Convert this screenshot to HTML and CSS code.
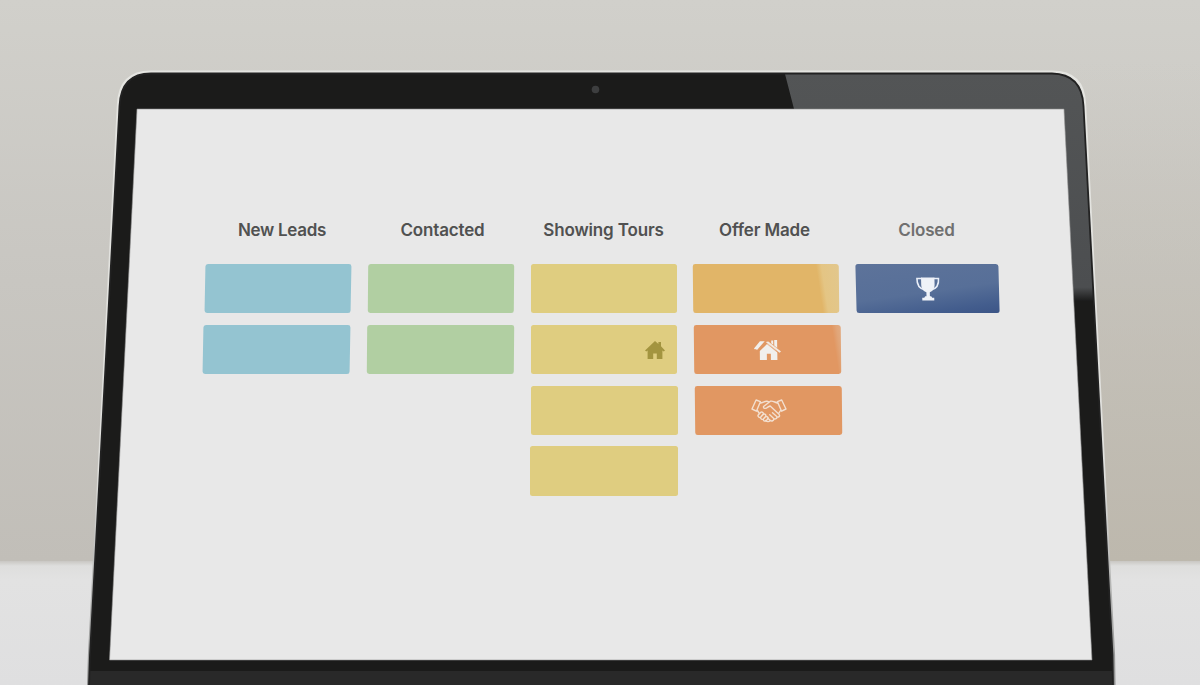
FILE: index.html
```html
<!DOCTYPE html>
<html lang="en">
<head>
<meta charset="utf-8">
<title>Sales Pipeline</title>
<link rel="stylesheet" href="styles.css">
</head>
<body>
<div class="scene">
  <svg class="laptop" viewBox="0 0 1200 685" aria-hidden="true">
    <defs>
      <linearGradient id="wall" x1="0" y1="0" x2="0" y2="1"><stop offset="0" stop-color="#d1d0cb"/><stop offset=".5" stop-color="#c8c6c1"/><stop offset="1" stop-color="#c1beb8"/></linearGradient>
      <linearGradient id="warm" x1="0" y1="0" x2="0" y2="1"><stop offset="0" stop-color="#c5c1b7" stop-opacity="0"/><stop offset="1" stop-color="#bdb8ad"/></linearGradient>
      <linearGradient id="desk" x1="0" y1="0" x2="0" y2="1"><stop offset="0" stop-color="#c9c7c3"/><stop offset=".04" stop-color="#dededd"/><stop offset=".15" stop-color="#e2e2e2"/><stop offset="1" stop-color="#dfdfe0"/></linearGradient>
      <linearGradient id="edge" gradientUnits="userSpaceOnUse" x1="0" y1="70" x2="0" y2="685"><stop offset="0" stop-color="#e5e5e1"/><stop offset=".65" stop-color="#e0e0dd"/><stop offset="1" stop-color="#8e8f8f"/></linearGradient>
      <linearGradient id="shine" gradientUnits="userSpaceOnUse" x1="0" y1="72" x2="0" y2="301"><stop offset="0" stop-color="#535556"/><stop offset=".94" stop-color="#4c4e50"/><stop offset="1" stop-color="#1b1b1b"/></linearGradient>
      <clipPath id="bezel"><path d="M89 685 L90 655 L119.500 106 Q121 73.500 151 73.500 L1052 73.500 Q1082 74 1083.500 106 L1112.500 655 L1113 685 Z"/></clipPath>
    </defs>
    <rect width="1200" height="562" fill="url(#wall)"/>
    <rect x="1070" y="60" width="130" height="502" fill="url(#warm)"/>
    <rect y="561" width="1200" height="124" fill="url(#desk)"/>
    <path d="M88.500 690 L89.500 655 L118.500 104 Q120 72 151 72 L1052 72 Q1083.500 72 1084.500 104 L1113.500 655 L1114 690" fill="#151515" stroke="url(#edge)" stroke-width="3.200"/>
    <g clip-path="url(#bezel)">
      <rect x="80" y="70" width="1040" height="615" fill="#1b1b1a"/>
      <path d="M785 74 H1100 V301 H1060 V109 H794 Z" fill="url(#shine)"/>
      <rect x="80" y="671" width="1040" height="14" fill="#292929"/>
    </g>
    <path d="M89 685 L90 655 L119.500 106 Q121 73.500 151 73.500 L1052 73.500 Q1082 74 1083.500 106 L1112.500 655 L1113 685" fill="none" stroke="#222" stroke-width="1.800"/>
    <circle cx="595.500" cy="89.500" r="3.800" fill="#3d3e3f"/>
    <path d="M137 109 H1064 L1092 660 H109.500 Z" fill="#e8e8e8" stroke="#8f8f8f" stroke-width=".6"/>
  </svg>

  <main class="board">
    <section class="column leads">
      <h2 class="title">New Leads</h2>
      <div class="card blue"></div>
      <div class="card blue second"></div>
    </section>
    <section class="column contacted">
      <h2 class="title">Contacted</h2>
      <div class="card green"></div>
      <div class="card green second"></div>
    </section>
    <section class="column tours">
      <h2 class="title">Showing Tours</h2>
      <div class="card yellow"></div>
      <div class="card yellow second tour-card">
        <svg class="home" viewBox="0 0 20 18"><path fill="currentColor" d="M10 0 L13.400 3 V1 H16 V5.300 L20 9.400 L18.700 10.600 L17.400 9.500 V18 H11.800 V12.500 H8.200 V18 H2.600 V9.500 L1.300 10.600 L0 9.400 Z"/></svg>
      </div>
      <div class="card yellow third"></div>
      <div class="card yellow fourth"></div>
    </section>
    <section class="column offers">
      <h2 class="title">Offer Made</h2>
      <div class="card amber"></div>
      <div class="card orange second">
        <svg class="houses" viewBox="0 0 27 20"><g fill="#f1efec"><path d="M0 8.400 L6 1.300 H10.800 L3 10 L1.800 9 L1 9.600 Z"/><path d="M13.600 3.600 L23.300 12 V20 H16.800 V13.800 H12.800 V20 H5.800 V11 Z"/><path d="M17.300 3.200 V.5 H19.300 V4.800 Z M20.300 0 H23.200 V8 L20.300 5.400 Z"/></g><path d="M4.200 11.600 L12.400 3.200 L25 13.500" fill="none" stroke="#e19762" stroke-width=".7"/><path d="M11.800 2 L14.400 1.500 L27 11.600 L25.500 12.800 Z" fill="#f2e9e1"/></svg>
      </div>
      <div class="card orange third">
        <svg class="handshake" viewBox="0 0 36 24" fill="none" stroke="#f3dfcf" stroke-width="1.400" stroke-linecap="round" stroke-linejoin="round"><path d="M5.200 1 L9.500 2.700 L5.400 12.200 L1 10 Z M30.800 1 L26.500 2.700 L30.600 12.200 L35 10 Z"/><path d="M9.500 4 C12 3.800 13.500 2 16 2.200 L18 3 M26.700 4 C24 3.500 22 1.500 19.500 2.200 L12.600 7.500 C12 9.800 14.800 10 17 8 L19.200 7 L28 15.300 C29.500 17.300 27.200 18.700 25.700 17.500 L21.500 13.700 M25.700 17.500 C26.500 19.500 24 20.700 22.700 19.500 L18.700 15.800 M22.700 19.500 C23 21.700 20.500 22.700 19 21.300 L16.500 19 M19 21.300 C18 23 16 23 14.500 21.500 M6.400 11.500 L8 14 M29.500 11.500 L28 14"/><path d="M7.200 16 L9.700 13.300 C11.200 12.200 13 14 12 15.300 L9.700 18 C8.400 19.100 6.200 17.500 7.200 16 M9.700 18 L12.400 15.300 C13.900 14.400 15.500 16 14.500 17.400 L12.300 20 C11 21 9 19.500 9.700 18 M12.300 20 L14.700 17.600 C16 17 17.700 18.300 16.800 19.800 L15 21.800 C13.600 22.700 11.800 21.500 12.300 20"/></svg>
      </div>
    </section>
    <section class="column closed">
      <h2 class="title">Closed</h2>
      <div class="card navy">
        <svg class="trophy" viewBox="0 0 24 24"><path d="M6 1.500 H1.200 C1 7 3 11.500 8.500 12.700 M18 1.500 H22.800 C23 7 21 11.500 15.500 12.700" fill="none" stroke="#e9eef8" stroke-width="1.600"/><path d="M5.300 .5 H18.700 V7.500 C18.700 11.500 16.500 14.200 13.700 15.200 V19.200 H15 L16 20.800 H18 V23.500 H6 V20.800 H8 L9 19.200 H10.300 V15.200 C7.500 14.200 5.300 11.500 5.300 7.500 Z" fill="#eff2f8"/></svg>
      </div>
    </section>
  </main>
</div>
</body>
</html>
```
FILE: styles.css
```css
body {
  margin: 0;
  overflow: hidden;
}

.scene {
  display: grid;
  width: 1200px;
  height: 685px;
  overflow: hidden;
}

.laptop,
.board {
  grid-area: 1 / 1;
}

.laptop {
  width: 1200px;
  height: 685px;
}

.board {
  z-index: 1;
  display: grid;
  grid-template-columns: 147px 147px 147px 147px 144px;
  column-gap: 16px;
  align-items: start;
  padding: 218px 0 0 204px;
}

.column {
  display: flex;
  flex-direction: column;
  gap: 11.6px;
}

.title {
  width: max-content;
  height: 24px;
  margin: 0 auto 10.8px;
  font: 600 17px/24px Inter, "Liberation Sans", sans-serif;
  letter-spacing: -.15px;
  color: #505151;
}

.leads .title {
  letter-spacing: -.3px;
  transform: translateX(4.5px);
}

.contacted .title {
  transform: translateX(2px);
}

.offers .title {
  transform: translateX(-2px);
}

.closed .title {
  color: #707070;
  transform: translateX(-1.5px);
}

.card {
  display: flex;
  align-items: center;
  justify-content: center;
  box-sizing: border-box;
  width: 147px;
  height: 49px;
  border-radius: 2.5px;
}

.leads .card {
  width: 146px;
  margin-left: .7px;
  transform: skewX(-1.1deg);
}

.leads .second {
  width: 147px;
  margin-left: -1.1px;
}

.contacted .card {
  width: 146px;
  margin-left: .9px;
  transform: skewX(-.5deg);
}

.contacted .second {
  width: 147px;
  margin-left: -.1px;
}

.tours .card {
  width: 145.6px;
  margin-left: 1px;
}

.tours .second {
  width: 146.3px;
  margin-left: .7px;
}

.tours .third {
  width: 147px;
  margin-left: .6px;
}

.tours .fourth {
  width: 148px;
  height: 50px;
  margin-left: .2px;
}

.offers .card {
  width: 145.5px;
  margin-left: .2px;
  transform: skewX(.6deg);
}

.offers .second {
  width: 146.5px;
  margin-left: .8px;
}

.offers .third {
  width: 147px;
  margin-left: 1.6px;
}

.closed .card {
  width: 143px;
  margin-left: .2px;
  transform: skewX(1.5deg);
}

.blue { background: #94c4d1; }
.green { background: #b1cfa2; }
.yellow { background: #dfcd80; }
.amber { background: linear-gradient(82deg, #e1b568 0 85%, #e4c584 88.5%, #e2c78d 100%); }
.orange { background: #e19762; }
.offers .second { background: linear-gradient(82deg, #e19762 0 94%, #e1a578 97%, #e2ac83 100%); }
.navy { background: linear-gradient(172deg, #5d739a 0%, #576f98 55%, #435d8d 85%, #3c5587 100%); }

.tour-card {
  justify-content: flex-end;
  padding: 2px 12px 0 0;
}

.home {
  width: 20px;
  height: 18px;
  color: #a3943f;
}

.houses {
  width: 27px;
  height: 20px;
  margin-left: 1px;
}

.handshake {
  width: 36px;
  height: 24px;
  margin-left: 1px;
}

.trophy {
  width: 24px;
  height: 24px;
}
```
